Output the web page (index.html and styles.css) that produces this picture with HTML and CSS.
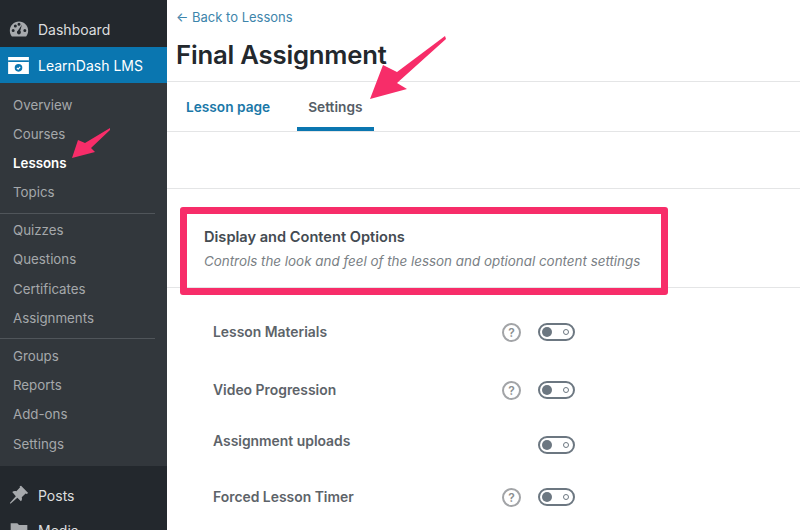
FILE: index.html
```html
<!DOCTYPE html>
<html lang="en">
<head>
<meta charset="utf-8">
<title>Final Assignment</title>
<link rel="stylesheet" href="styles.css">
</head>
<body>
<div class="page">
  <aside class="sidebar">
    <div class="top-item dashboard">
      <svg class="menu-icon" viewBox="0 0 24 24"><path fill-rule="evenodd" d="M12 3C5.900 3 1 7.900 1 14c0 2.600 .9 5 2.500 6.900h17C22.100 19 23 16.600 23 14 23 7.900 18.100 3 12 3zM5 15.500a1.800 1.800 0 1 1 0-3.600 1.800 1.800 0 0 1 0 3.600zm2.600-5.400a1.800 1.800 0 1 1 0-3.600 1.800 1.800 0 0 1 0 3.600zM12 8a1.800 1.800 0 1 1 0-3.600A1.800 1.800 0 0 1 12 8zm0 10.500a2.500 2.500 0 0 1-1.200-4.700L15.500 7l-2 7.200a2.500 2.500 0 0 1-1.500 4.300zm7-3a1.800 1.800 0 1 1 0-3.600 1.800 1.800 0 0 1 0 3.600z"/></svg>
      <span>Dashboard</span>
    </div>
    <div class="top-item current">
      <svg class="menu-icon ld-icon" viewBox="0 0 22 18"><path class="ld-white" d="M0 0h22v18H0z"/><path class="ld-blue" d="M0 3.500h22v1.800H0z"/><circle class="ld-blue" cx="11" cy="11.500" r="4"/><path class="ld-check" d="M9.300 11.500l1.300 1.300 2.200-2.400"/></svg>
      <span>LearnDash LMS</span>
    </div>
    <nav class="submenu">
      <ul class="group">
        <li>Overview</li>
        <li>Courses</li>
        <li class="active">Lessons</li>
        <li>Topics</li>
      </ul>
      <ul class="group">
        <li>Quizzes</li>
        <li>Questions</li>
        <li>Certificates</li>
        <li>Assignments</li>
      </ul>
      <ul class="group">
        <li>Groups</li>
        <li>Reports</li>
        <li>Add-ons</li>
        <li>Settings</li>
      </ul>
    </nav>
    <div class="top-item posts">
      <svg class="menu-icon" viewBox="0 0 24 24"><path d="M14.500 1l8.500 8.500-1.800 1.300-1.300-.6-4.600 4.400c.6 2 .2 3.700-1 5l-4.300-4.300-8.200 7.200-.8-.8 7.200-8.200L3.900 8.400c1.300-1.200 3-1.600 5-1l4.400-4.600-.6-1.300z"/></svg>
      <span>Posts</span>
    </div>
    <div class="top-item media">
      <svg class="menu-icon" viewBox="0 0 24 24"><path d="M2 4h8l2 2h10v14H2z"/></svg>
      <span>Media</span>
    </div>
  </aside>

  <main class="main">
    <header class="head">
      <a class="back">← Back to Lessons</a>
      <h1>Final Assignment</h1>
    </header>
    <div class="tabs">
      <a class="tab">Lesson page</a>
      <a class="tab selected">Settings</a>
    </div>
    <div class="spacer"></div>
    <section class="section-head">
      <h2>Display and Content Options</h2>
      <p>Controls the look and feel of the lesson and optional content settings</p>
    </section>
    <div class="rows">
      <div class="row r1">
        <span class="label">Lesson Materials</span>
        <span class="help">?</span>
        <span class="toggle"><i class="knob"></i><i class="dot"></i></span>
      </div>
      <div class="row r2">
        <span class="label">Video Progression</span>
        <span class="help">?</span>
        <span class="toggle"><i class="knob"></i><i class="dot"></i></span>
      </div>
      <div class="row r3">
        <span class="label">Assignment uploads</span>
        <span class="help none"></span>
        <span class="toggle"><i class="knob"></i><i class="dot"></i></span>
      </div>
      <div class="row r4">
        <span class="label">Forced Lesson Timer</span>
        <span class="help">?</span>
        <span class="toggle"><i class="knob"></i><i class="dot"></i></span>
      </div>
    </div>
    <div class="redbox"></div>
  </main>
  <svg class="arrows" viewBox="0 0 800 530">
    <path d="M445 36 L397 72 L383 65 L370 99 L407 89 L397 83 L446 39 Z"/>
    <path d="M110 128 L85 143 L78 140 L72 158 L95 152 L91 148 L110 130 Z"/>
  </svg>
</div>
</body>
</html>
```
FILE: styles.css
```css
* { box-sizing: border-box; }
html, body { margin: 0; padding: 0; }
body {
  width: 800px;
  height: 530px;
  overflow: hidden;
  background: #fff;
  font-family: Inter, "Liberation Sans", sans-serif;
}
.page { position: relative; display: flex; width: 800px; height: 530px; overflow: hidden; }

.sidebar {
  flex: 0 0 167px;
  height: 530px;
  background: #23282d;
  padding-top: 11px;
  overflow: hidden;
  color: #dcdedf;
}
.top-item {
  display: flex;
  align-items: center;
  gap: 9px;
  height: 36px;
  padding-left: 9px;
  font-size: 14px;
}
.menu-icon { width: 20px; height: 20px; flex: none; fill: #a7aaad; }
.current { background: #0a76b0; color: #fff; padding-left: 8px; }
.ld-icon { width: 21px; height: 17px; }
.ld-white { fill: #fff; }
.ld-blue { fill: #0a76b0; }
.ld-check { fill: none; stroke: #fff; stroke-width: 1.300; }
.posts { margin-top: 11px; }
.media { margin-top: -1px; }

.submenu { background: #32373c; padding: 7.500px 0 2px; }
.group {
  list-style: none;
  margin: 0 12px 2.500px 0;
  padding: 0 0 5px;
  border-bottom: 1px solid #50555a;
}
.group:last-child { border-bottom: 0; margin-bottom: 0; }
.group li {
  height: 29.300px;
  line-height: 29.300px;
  padding-left: 13px;
  font-size: 13.300px;
  color: #a5a8ab;
}
.group li.active { color: #fff; font-weight: 600; }

.main { position: relative; flex: 1; min-width: 0; color: #23282d; }
.head { padding: 9px 0 0 9px; height: 82px; border-bottom: 1px solid #e4e5e6; }
.back { display: block; font-size: 13px; line-height: 17px; color: #3d85ab; }
h1 { margin: 11px 0 0; font-size: 25.700px; line-height: 36px; font-weight: 600; color: #23282d; letter-spacing: -0.2px; }

.tabs {
  display: flex;
  height: 50px;
  padding-left: 19px;
  gap: 27px;
  border-bottom: 1px solid #e4e5e6;
}
.tab {
  font-size: 13.700px;
  font-weight: 600;
  line-height: 50px;
  color: #1a78a8;
}
.tab.selected {
  color: #555d66;
  padding: 0 11px;
  height: 49px;
  border-bottom: 4px solid #0a76b0;
}
.spacer { height: 57px; border-bottom: 1px solid #e4e5e6; }

.section-head {
  height: 99px;
  padding: 39px 0 0 37px;
  border-bottom: 1px solid #e4e5e6;
}
h2 { margin: 0; font-size: 14.600px; line-height: 18px; font-weight: 600; color: #444b52; }
.section-head p { margin: 6px 0 0; font-size: 13.400px; line-height: 18px; font-style: italic; color: #7a7f85; }

.rows { padding: 15px 0 0 46px; }
.row { display: flex; align-items: center; height: 58px; }
.r3 { height: 52px; }
.r4 { height: 52px; }
.label { width: 289px; font-size: 13.900px; font-weight: 600; color: #5d6369; }
.r3 .label { margin-top: -8px; }
.help {
  display: flex;
  align-items: center;
  justify-content: center;
  width: 19px;
  height: 19px;
  border: 2px solid #a2a4a7;
  border-radius: 50%;
  font-size: 12px;
  font-weight: 600;
  color: #8b8e91;
}
.help.none { border: 0; }
.toggle {
  position: relative;
  display: block;
  width: 37px;
  height: 18px;
  margin-left: 17px;
  border: 2px solid #6c7781;
  border-radius: 9px;
}
.knob { position: absolute; left: 2px; top: 2px; width: 10px; height: 10px; border-radius: 50%; background: #6c7781; }
.dot { position: absolute; right: 4px; top: 4px; width: 6px; height: 6px; border-radius: 50%; border: 1.500px solid #6c7781; }

.redbox {
  position: absolute;
  left: 13px;
  top: 207px;
  width: 488px;
  height: 88px;
  border: 7px solid #f72d69;
  border-radius: 3px;
}
.arrows { position: absolute; left: 0; top: 0; width: 800px; height: 530px; fill: #f72d69; pointer-events: none; }
```
